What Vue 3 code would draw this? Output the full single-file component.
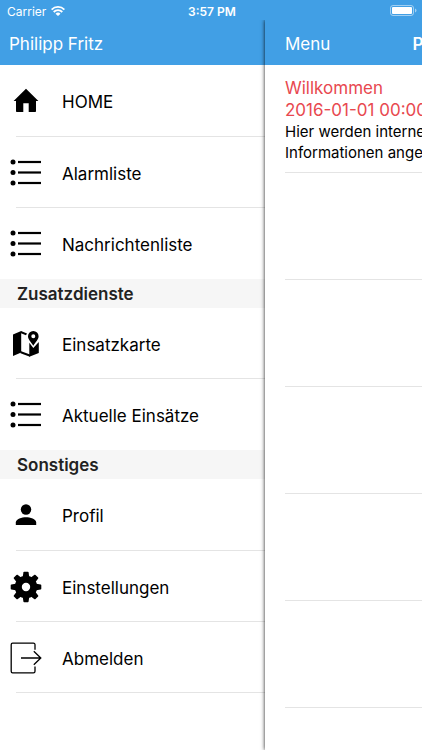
<script setup>
const groups = [
  {
    title: '',
    items: [
      { label: 'HOME', icon: 'home' },
      { label: 'Alarmliste', icon: 'list' },
      { label: 'Nachrichtenliste', icon: 'list' },
    ],
  },
  {
    title: 'Zusatzdienste',
    items: [
      { label: 'Einsatzkarte', icon: 'map' },
      { label: 'Aktuelle Einsätze', icon: 'list' },
    ],
  },
  {
    title: 'Sonstiges',
    items: [
      { label: 'Profil', icon: 'person' },
      { label: 'Einstellungen', icon: 'gear' },
      { label: 'Abmelden', icon: 'exit' },
    ],
  },
]
const teeth = [0, 45, 90, 135, 180, 225, 270, 315]
</script>

<template>
  <div class="app">
    <header class="status">
      <span class="carrier">
        Carrier
        <svg class="wifi" viewBox="0 0 14 10" aria-hidden="true">
          <path d="M0.6 3.6A9 9 0 0 1 13.4 3.6M2.7 6A6 6 0 0 1 11.3 6" fill="none" stroke="#fff" stroke-width="1.8" />
          <path d="M4.5 7.8A3.6 3.6 0 0 1 9.5 7.8L7 10Z" fill="#fff" />
        </svg>
      </span>
      <time>3:57 PM</time>
      <svg class="battery" viewBox="0 0 27 12" aria-hidden="true">
        <rect x="0.5" y="0.5" width="23" height="10" rx="2.5" fill="none" stroke="#fff" stroke-opacity=".5" />
        <rect x="2" y="2" width="20" height="7" rx="1" fill="#fff" />
        <path d="M25 3.5Q26.5 4 26.5 5.5T25 7.5Z" fill="#fff" fill-opacity=".5" />
      </svg>
    </header>

    <div class="panes">
      <aside class="drawer">
        <div class="bar">Philipp Fritz</div>
        <nav>
          <section v-for="group in groups" :key="group.title">
            <h2 v-if="group.title">{{ group.title }}</h2>
            <ul>
              <li v-for="item in group.items" :key="item.label">
                <a href="#">
                  <svg viewBox="0 0 32 32" aria-hidden="true">
                    <path v-if="item.icon === 'home'" d="M16 3.8L28.4 16H26V26.2Q26 27 25.2 27H18.7V18.3H13.3V27H6.8Q6 27 6 26.2V16H3.6Z" />
                    <g v-else-if="item.icon === 'list'">
                      <g v-for="y in [5, 15.5, 26]" :key="y">
                        <circle cx="3" :cy="y" r="2.5" />
                        <path :d="`M8 ${y - 1.1}H31V${y + 1.1}H8Z`" />
                      </g>
                    </g>
                    <g v-else-if="item.icon === 'map'">
                      <path d="M3 6.5L11.2 3V24.5L3 28Z" />
                      <path d="M11 3L17 5.5L16 7.2L11 5.2Z" />
                      <path d="M10.5 23L20 26.6V28.8L10.5 25.2Z" />
                      <path d="M19.3 14.8L23.3 20L28.8 14V25L19.3 28.8Z" />
                      <path fill-rule="evenodd" d="M23.3 3A5.3 5.3 0 0 1 28.6 8.3C28.6 11.5 25.8 13.6 23.3 17.8C20.8 13.6 18 11.5 18 8.3A5.3 5.3 0 0 1 23.3 3ZM23.3 6.2A2 2 0 1 0 23.3 10.2A2 2 0 1 0 23.3 6.2Z" />
                    </g>
                    <g v-else-if="item.icon === 'person'">
                      <circle cx="16" cy="10.5" r="5.2" />
                      <path d="M5.8 26V23.4C5.8 20 12 18.2 16 18.2S26.2 20 26.2 23.4V26Z" />
                    </g>
                    <g v-else-if="item.icon === 'gear'">
                      <path v-for="t in teeth" :key="t" :transform="`rotate(${t} 16 16)`" d="M12.6 7L13.4 1.4Q13.5.7 14.2.7H17.8Q18.5.7 18.6 1.4L19.4 7Z" />
                      <circle cx="16" cy="16" r="7.7" fill="none" stroke="#000" stroke-width="7" />
                    </g>
                    <path v-else d="M25 7.8V2.8Q25 1.2 23.4 1.2H2.6Q1.2 1.2 1.2 2.8V29.2Q1.2 30.8 2.6 30.8H23.4Q25 30.8 25 29.2V24.5M11 16H30.6M23.8 9.2L30.8 16L23.8 22.8" fill="none" stroke="#000" stroke-width="1.3" />
                  </svg>
                  <span>{{ item.label }}</span>
                </a>
              </li>
            </ul>
          </section>
        </nav>
      </aside>

      <main class="content">
        <div class="bar">
          <button type="button">Menu</button>
          <h1>Philipp Fritz</h1>
        </div>
        <div class="feed">
          <article>
            <h3>Willkommen</h3>
            <h3>2016-01-01 00:00</h3>
            <p>Hier werden interne</p>
            <p>Informationen angezeigt</p>
          </article>
          <div v-for="n in 5" :key="n" class="blank"></div>
        </div>
      </main>
    </div>
  </div>
</template>

<style>
body {
  margin: 0;
  background: #fff;
}
</style>

<style scoped>
.app {
  display: flex;
  flex-direction: column;
  height: 100vh;
  overflow: hidden;
  font-family: Inter, "Liberation Sans", sans-serif;
  font-size: 17px;
  color: #000;
}
.status {
  display: grid;
  grid-template-columns: 1fr auto 1fr;
  align-items: center;
  height: 20px;
  flex: none;
  padding: 2px 5px 0 7px;
  box-sizing: border-box;
  background: #419fe5;
  color: #fff;
  font-size: 12px;
}
.carrier {
  display: flex;
  align-items: center;
  gap: 5px;
}
.wifi {
  width: 14px;
  height: 10px;
}
time {
  font-weight: 600;
}
.battery {
  width: 27px;
  height: 12px;
  justify-self: end;
}
.panes {
  display: flex;
  flex: 1;
  min-height: 0;
}
.drawer {
  flex: 0 0 265px;
}
.bar {
  display: flex;
  align-items: center;
  box-sizing: border-box;
  height: 45px;
  padding: 2px 9px 0;
  background: #419fe5;
  color: #fff;
  white-space: nowrap;
}
h1, h2, h3, p, ul {
  margin: 0;
  padding: 0;
}
ul {
  list-style: none;
}
h2 {
  padding: 1px 0 0 17px;
  background: #f6f6f6;
  color: #222;
  font-size: 17px;
  font-weight: 600;
  line-height: 28px;
}
a {
  display: flex;
  align-items: center;
  gap: 20px;
  height: 71px;
  padding-left: 10px;
  color: inherit;
  text-decoration: none;
}
a svg {
  width: 32px;
  height: 32px;
}
a span {
  padding-top: 2px;
}
section:first-child li:first-child a,
section:last-child li:first-child a {
  height: 72px;
}
li {
  background: linear-gradient(#e4e4e4, #e4e4e4) 16px 100% / 100% 1px no-repeat;
}
section:not(:last-child) li:last-child {
  background: none;
}
.content {
  flex: 1;
  min-width: 0;
  background: #fff;
  box-shadow: 0 0 4px rgba(0, 0, 0, 0.9);
  clip-path: inset(0 0 0 -8px);
}
.content .bar {
  gap: 82px;
  padding-left: 20px;
  padding-right: 0;
  overflow: hidden;
}
button {
  padding: 0;
  border: 0;
  background: none;
  color: inherit;
  font: inherit;
}
h1 {
  font-size: 17px;
  font-weight: 600;
}
.feed {
  padding-left: 20px;
}
article {
  height: 108px;
  padding-top: 12px;
  box-sizing: border-box;
  overflow: hidden;
  white-space: nowrap;
}
article, .blank {
  border-bottom: 1px solid #e4e4e4;
}
.blank {
  height: 106px;
}
h3 {
  color: #e8484f;
  font-size: 17px;
  font-weight: 400;
  line-height: 22px;
}
p {
  font-size: 15px;
  line-height: 21px;
}
</style>
